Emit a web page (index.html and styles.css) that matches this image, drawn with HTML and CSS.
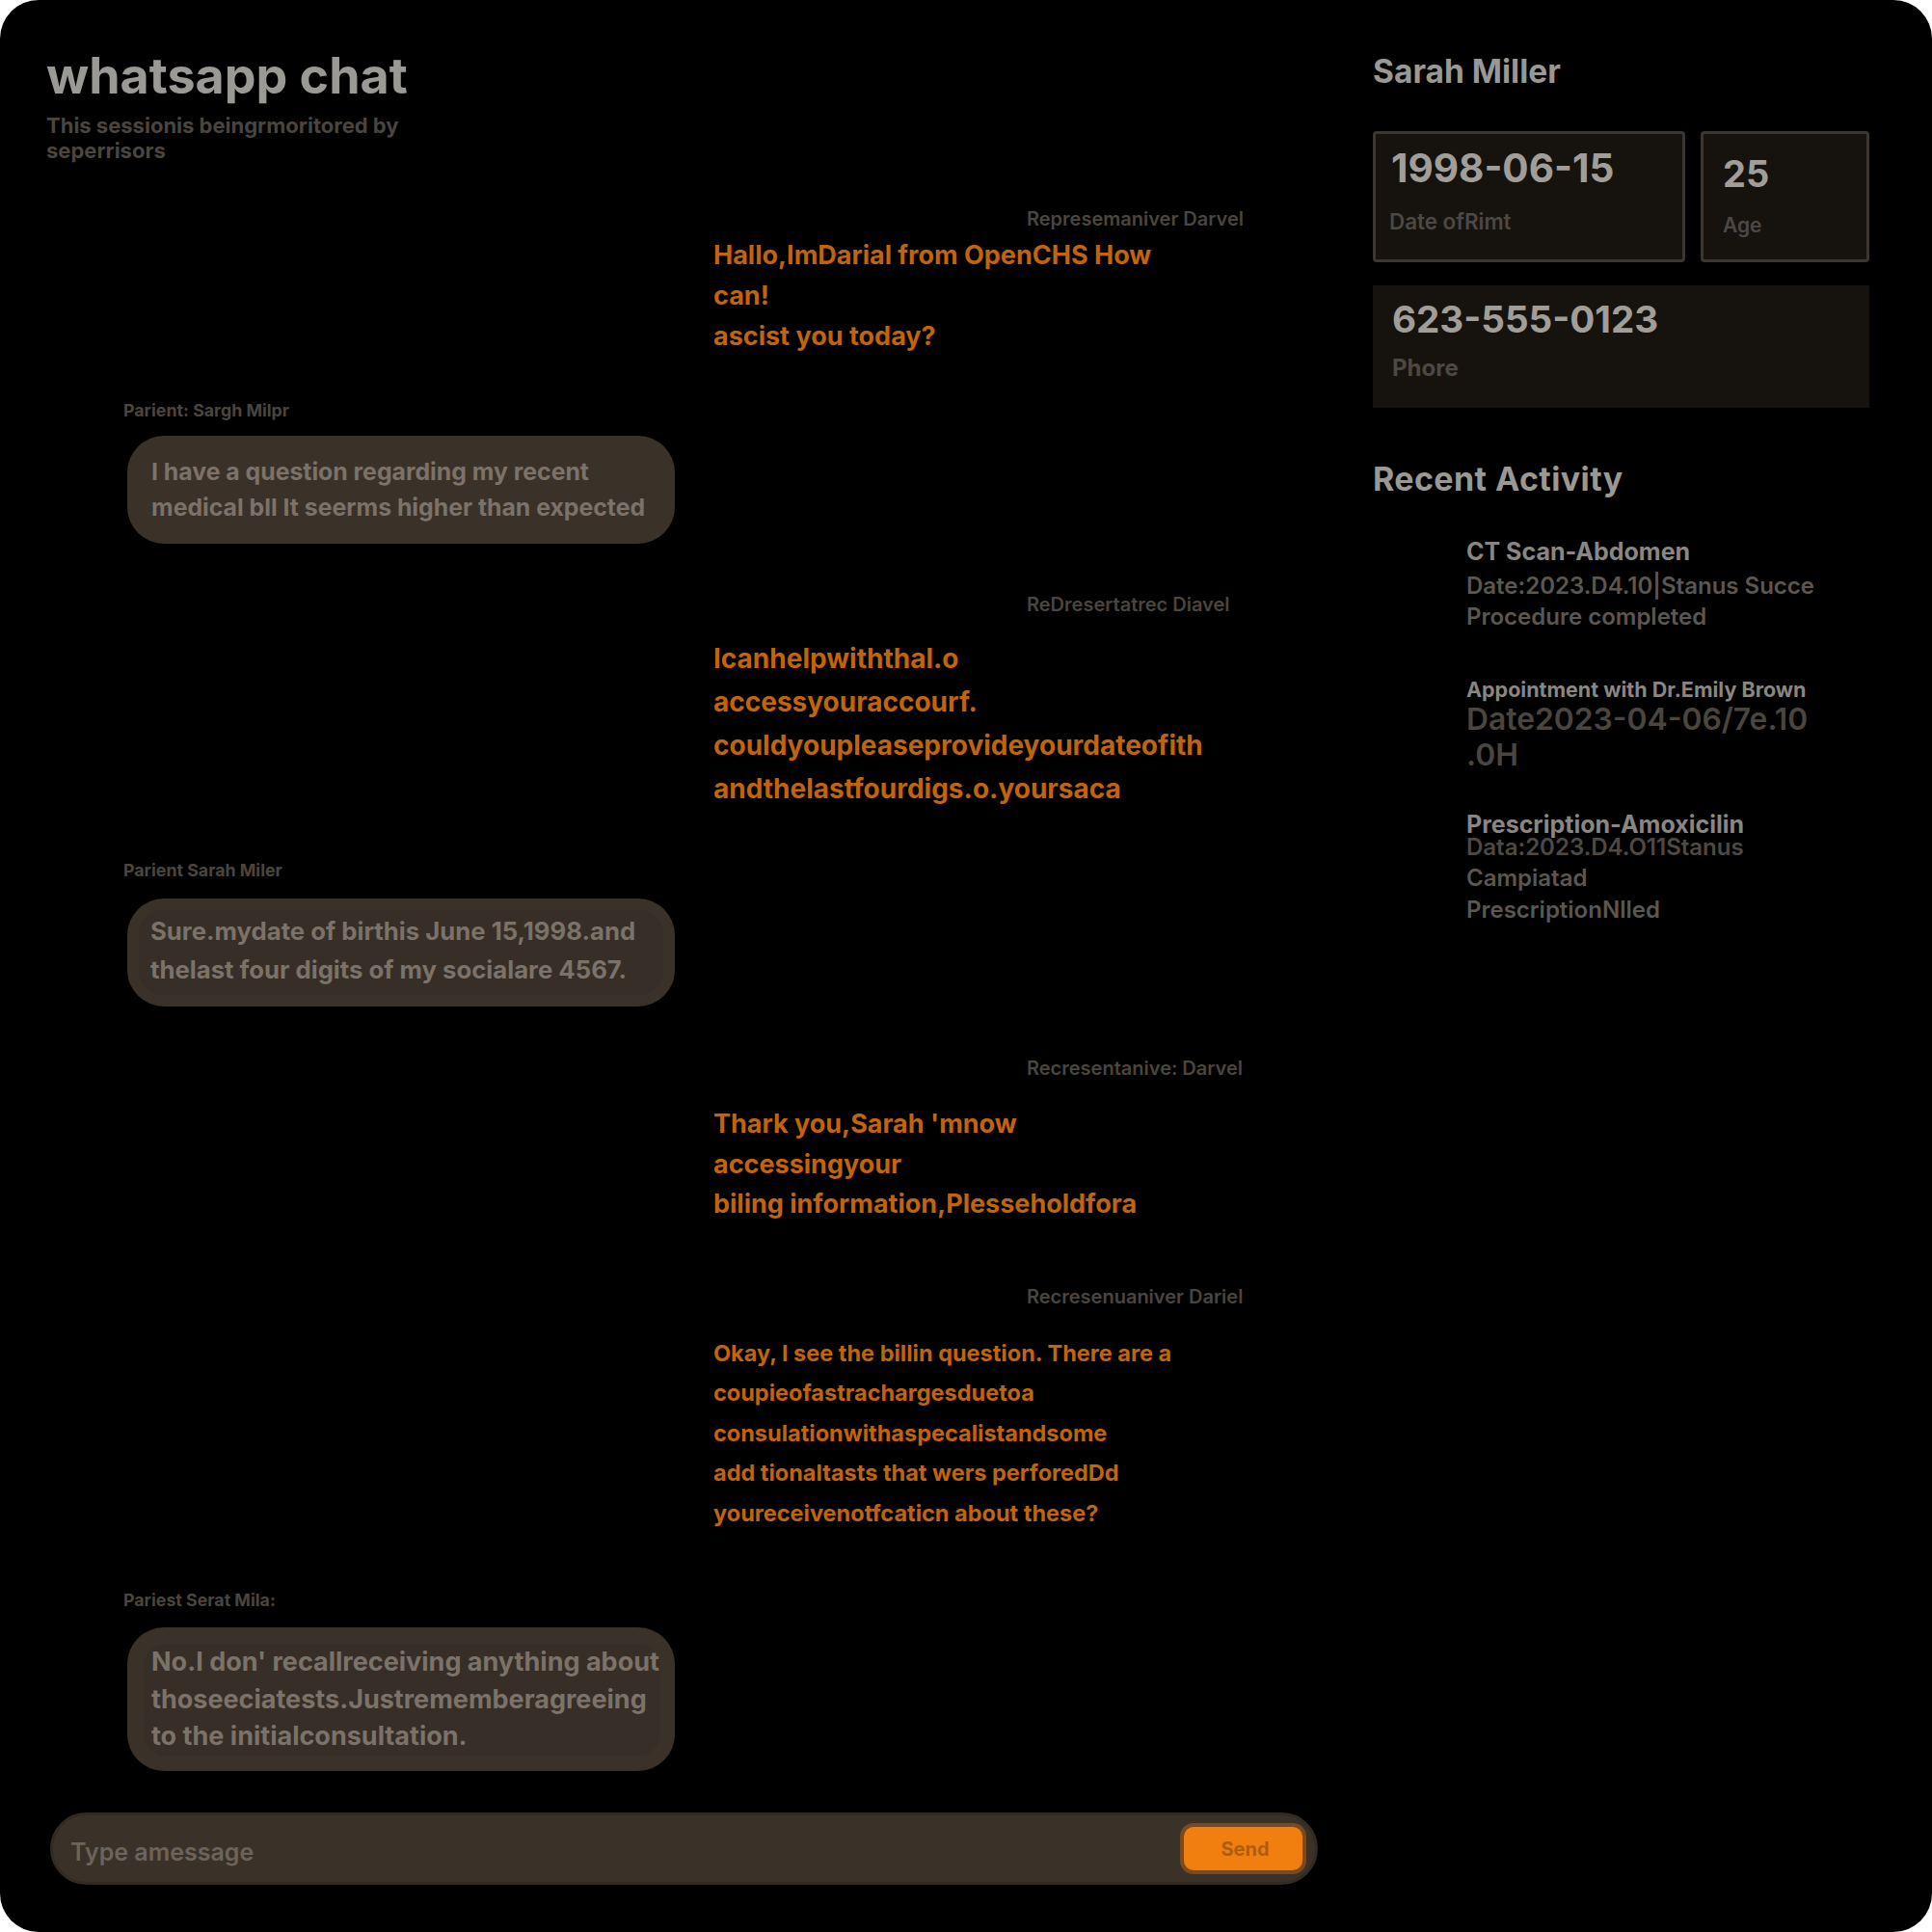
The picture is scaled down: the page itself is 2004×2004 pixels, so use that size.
FILE: index.html
```html
<!DOCTYPE html>
<html lang="en">
<head>
<meta charset="utf-8">
<title>whatsapp chat</title>
<link rel="stylesheet" href="styles.css">
</head>
<body>
<div class="app">
  <section class="chat">
    <header class="chat-head">
      <h1 class="title">whatsapp chat</h1>
      <p class="subtitle">This sessionis beingrmoritored by seperrisors</p>
    </header>

    <div class="messages">
      <div class="msg msg-rep">
        <div class="rep-label">Represemaniver Darvel</div>
        <p class="rep-text rep-tight">Hallo,ImDarial from OpenCHS How<br>can!<br>ascist you today?</p>
      </div>

      <div class="msg msg-pat gap-46">
        <div class="pat-label">Parient: Sargh Milpr</div>
        <div class="bubble bubble-plain">
          <p class="bubble-text">I have a question regarding my recent<br>medical bll It seerms higher than expected</p>
        </div>
      </div>

      <div class="msg msg-rep">
        <div class="rep-label">ReDresertatrec Diavel</div>
        <p class="rep-text rep-wide">Icanhelpwiththal.o<br>accessyouraccourf.<br>couldyoupleaseprovideyourdateofith<br>andthelastfourdigs.o.yoursaca</p>
      </div>

      <div class="msg msg-pat gap-52">
        <div class="pat-label">Parient Sarah Miler</div>
        <div class="bubble bubble-nested">
          <p class="bubble-inner bubble-text-md">Sure.mydate of birthis June 15,1998.and<br>thelast four digits of my socialare 4567.</p>
        </div>
      </div>

      <div class="msg msg-rep gap-52">
        <div class="rep-label">Recresentanive: Darvel</div>
        <p class="rep-text rep-mid">Thark you,Sarah 'mnow<br>accessingyour<br>biling information,Plesseholdfora</p>
      </div>

      <div class="msg msg-rep gap-63">
        <div class="rep-label">Recresenuaniver Dariel</div>
        <p class="rep-text rep-small">Okay, I see the billin question. There are a<br>coupieofastrachargesduetoa<br>consulationwithaspecalistandsome<br>add tionaltasts that wers perforedDd<br>youreceivenotfcaticn about these?</p>
      </div>

      <div class="msg msg-pat gap-60">
        <div class="pat-label">Pariest Serat Mila:</div>
        <div class="bubble bubble-deep">
          <p class="bubble-inner bubble-text-lg">No.I don' recallreceiving anything about<br>thoseeciatests.Justrememberagreeing<br>to the initialconsultation.</p>
        </div>
      </div>
    </div>

    <div class="composer">
      <span class="placeholder">Type amessage</span>
      <button class="send" type="button">Send</button>
    </div>
  </section>

  <aside class="side">
    <h2 class="name">Sarah Miller</h2>

    <div class="cards">
      <div class="card card-boxed card-dob">
        <div class="card-value">1998-06-15</div>
        <div class="card-label">Date ofRimt</div>
      </div>
      <div class="card card-boxed card-age">
        <div class="card-value">25</div>
        <div class="card-label">Age</div>
      </div>
      <div class="card card-wide">
        <div class="card-value">623-555-0123</div>
        <div class="card-label">Phore</div>
      </div>
    </div>

    <h2 class="section-title">Recent Activity</h2>

    <div class="activity">
      <div class="act act-one">
        <div class="act-title">CT Scan-Abdomen</div>
        <div class="act-detail">Date:2023.D4.10|Stanus Succe</div>
        <div class="act-detail">Procedure completed</div>
      </div>
      <div class="act act-two">
        <div class="act-title act-title-sm">Appointment with Dr.Emily Brown</div>
        <div class="act-date">Date2023-04-06/7e.10<br>.0H</div>
      </div>
      <div class="act act-three">
        <div class="act-title act-title-tight">Prescription-Amoxicilin</div>
        <div class="act-detail act-detail-dim act-detail-tight">Data:2023.D4.O11Stanus</div>
        <div class="act-detail act-detail-gap">Campiatad</div>
        <div class="act-detail act-detail-loose">PrescriptionNlled</div>
      </div>
    </div>
  </aside>
</div>
</body>
</html>
```

FILE: styles.css
```css
html, body {
  margin: 0;
  padding: 0;
  background: #ffffff;
}

.app {
  width: 2004px;
  height: 2004px;
  background: #000000;
  border-radius: 40px;
  overflow: hidden;
  display: flex;
  font-family: Inter, "Noto Sans", sans-serif;
}

/* ---------- chat column ---------- */
.chat {
  flex: none;
  width: 1367px;
  box-sizing: border-box;
  padding: 48px 0 49px 48px;
  display: flex;
  flex-direction: column;
}

.title {
  margin: 0;
  font-size: 52px;
  line-height: 62px;
  font-weight: 700;
  color: #9b9994;
}

.subtitle {
  margin: 7px 0 0;
  width: 430px;
  font-size: 22px;
  line-height: 26px;
  font-weight: 700;
  color: #4a453f;
}

.messages {
  flex: 1;
  margin-top: 46px;
  display: flex;
  flex-direction: column;
}

.msg {
  margin-top: 51px;
}

.msg:first-child {
  margin-top: 0;
}

.msg.gap-46 { margin-top: 46px; }
.msg.gap-52 { margin-top: 52px; }
.msg.gap-60 { margin-top: 60px; }
.msg.gap-63 { margin-top: 63px; }

.msg-rep {
  padding-left: 692px;
}

.rep-label {
  margin-left: 325px;
  font-size: 20px;
  line-height: 24px;
  font-weight: 600;
  color: #4a453f;
}

.rep-text {
  margin: 0;
  font-size: 27px;
  font-weight: 700;
  color: #c1640c;
  white-space: nowrap;
}

.rep-tight { margin-top: 5px; line-height: 42px; }
.rep-wide { margin-top: 22px; line-height: 45px; font-size: 28px; }
.rep-mid { margin-top: 25px; line-height: 41.5px; }
.rep-small { margin-top: 26px; font-size: 23.5px; line-height: 41.5px; }

.msg-pat {
  padding-left: 80px;
}

.pat-label {
  font-size: 17.8px;
  line-height: 20px;
  font-weight: 700;
  color: #4a453f;
}

.bubble {
  margin: 16px 0 0 4px;
  width: 568px;
  box-sizing: border-box;
  background: #3a3129;
  border-radius: 38px;
  color: #7b7269;
  font-weight: 700;
}

.bubble p {
  margin: 0;
  white-space: nowrap;
}

.bubble-plain {
  padding: 19px 20px 19px 25px;
}

.bubble-text {
  font-size: 24.8px;
  line-height: 37px;
}

.bubble-nested {
  margin-top: 19px;
  padding: 12px;
}

.bubble-deep {
  margin-top: 18px;
  padding: 17px 15px 16px 17px;
}

.bubble-inner {
  background: #362e27;
  border-radius: 24px;
}

.bubble-text-md {
  padding: 2px 12px 6px;
  font-size: 25.7px;
  line-height: 40px;
}

.bubble-text-lg {
  padding: 0 8px;
  font-size: 27px;
  line-height: 38.5px;
}

.composer {
  flex: none;
  margin-left: 4px;
  height: 75px;
  box-sizing: border-box;
  border: 3px solid #322a23;
  border-radius: 38px;
  background: #3a3129;
  display: flex;
  align-items: center;
  justify-content: space-between;
  padding: 0 9px 0 18px;
}

.placeholder {
  font-size: 25px;
  font-weight: 600;
  color: #6c645b;
  padding-top: 6px;
}

.send {
  width: 131px;
  height: 53px;
  box-sizing: border-box;
  border: 4px solid #7a4a1e;
  border-radius: 14px;
  background: #f07f10;
  color: #b05c10;
  font-family: Inter, "Noto Sans", sans-serif;
  font-size: 20px;
  font-weight: 700;
  padding: 0 0 0 4px;
}

/* ---------- side panel ---------- */
.side {
  flex: none;
  width: 515px;
  margin-left: 57px;
  padding-top: 54px;
}

.name {
  margin: 0;
  font-size: 33.5px;
  line-height: 40px;
  font-weight: 700;
  color: #9a9893;
}

.cards {
  margin-top: 42px;
  display: grid;
  grid-template-columns: 324px 175px;
  column-gap: 16px;
  row-gap: 24px;
}

.card {
  background: #16130f;
  box-sizing: border-box;
}

.card-boxed {
  height: 136px;
  border: 3px solid #3b362f;
  border-radius: 4px;
}

.card-dob {
  padding: 13px 14px 0;
}

.card-age {
  padding: 18px 20px 0;
}

.card-wide {
  grid-column: 1 / -1;
  height: 127px;
  padding: 12px 20px 0;
}

.card-value {
  font-size: 38px;
  line-height: 46px;
  font-weight: 700;
  color: #a19e99;
}

.card-dob .card-value {
  font-size: 40.5px;
  padding-left: 2px;
}

.card-wide .card-value {
  font-size: 38.6px;
}

.card-label {
  margin-top: 19px;
  font-size: 21px;
  line-height: 26px;
  font-weight: 600;
  color: #4d4843;
}

.card-dob .card-label { font-size: 22.4px; }
.card-age .card-label { margin-top: 18px; }
.card-wide .card-label { margin-top: 15px; font-size: 24px; font-weight: 700; }

.section-title {
  margin: 54px 0 0;
  font-size: 34px;
  line-height: 40px;
  font-weight: 700;
  letter-spacing: 0.4px;
  color: #9a9893;
}

.activity {
  margin: 40px 0 0 97px;
  display: flex;
  flex-direction: column;
}

.act-two { margin-top: 45px; }
.act-three { margin-top: 42px; }

.act-title {
  font-size: 25px;
  line-height: 30px;
  font-weight: 700;
  color: #8a8681;
}

.act-title-sm {
  font-size: 21.5px;
  line-height: 28px;
}

.act-title-tight {
  font-size: 25px;
  line-height: 24px;
}

.act-detail {
  font-size: 24px;
  line-height: 32px;
  font-weight: 600;
  color: #5b5650;
}

.act-one .act-title + .act-detail { margin-top: 5px; }

.act-detail-dim { color: #4e4943; }
.act-detail-tight { line-height: 24px; }
.act-detail-gap { margin-top: 4px; }
.act-detail-loose { line-height: 33px; }

.act-date {
  margin-top: -2px;
  font-size: 31.8px;
  line-height: 37px;
  font-weight: 600;
  color: #4a453f;
}
```
